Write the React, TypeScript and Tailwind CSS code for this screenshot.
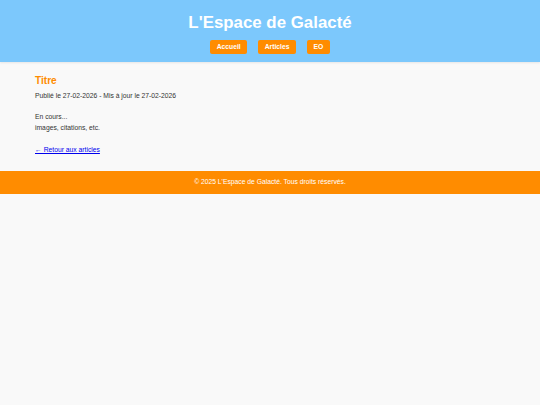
export default function App() {
  return (
    <div className="min-h-screen bg-[#f9f9f9] text-[#333] font-['Liberation_Sans',Arial,sans-serif]">
      {/* Header */}
      <header className="bg-[#7cc8fc] pt-[13px] pb-[8px] text-center shadow-[0_1px_2px_rgba(0,0,0,0.08)]">
        <h1 className="text-[16.875px] leading-[20px] font-bold text-white">L'Espace de Galacté</h1>
        <nav className="mt-[7px] flex justify-center gap-[11px]">
          <a href="#" className="bg-[#ff8c00] text-white font-bold text-[6.75px] leading-[8px] px-[6.5px] py-[3px] rounded-[2px]">
            Accueil
          </a>
          <a href="#" className="bg-[#ff8c00] text-white font-bold text-[6.75px] leading-[8px] px-[6.5px] py-[3px] rounded-[2px]">
            Articles
          </a>
          <a href="#" className="bg-[#ff8c00] text-white font-bold text-[6.75px] leading-[8px] px-[6.5px] py-[3px] rounded-[2px]">
            EO
          </a>
        </nav>
      </header>

      {/* Article */}
      <main className="px-[35px] pt-[13px] pb-[16.5px]">
        <h2 className="text-[10.125px] leading-[12px] font-bold text-[#ff8c00]">Titre</h2>
        <p className="mt-[2.5px] text-[6.75px] leading-[11px]">
          Publié le 27-02-2026 - Mis à jour le 27-02-2026
        </p>
        <div className="mt-[10px] text-[6.75px] leading-[11px]">
          <p>En cours...</p>
          <p>images, citations, etc.</p>
        </div>
        <p className="mt-[11px] text-[6.75px] leading-[11px]">
          <a href="#" className="text-[#0000ee] underline">← Retour aux articles</a>
        </p>
      </main>

      {/* Footer */}
      <footer className="bg-[#ff8c00] h-[23px] flex items-center justify-center text-white text-[6.75px]">
        © 2025 L'Espace de Galacté. Tous droits réservés.
      </footer>
    </div>
  );
}
